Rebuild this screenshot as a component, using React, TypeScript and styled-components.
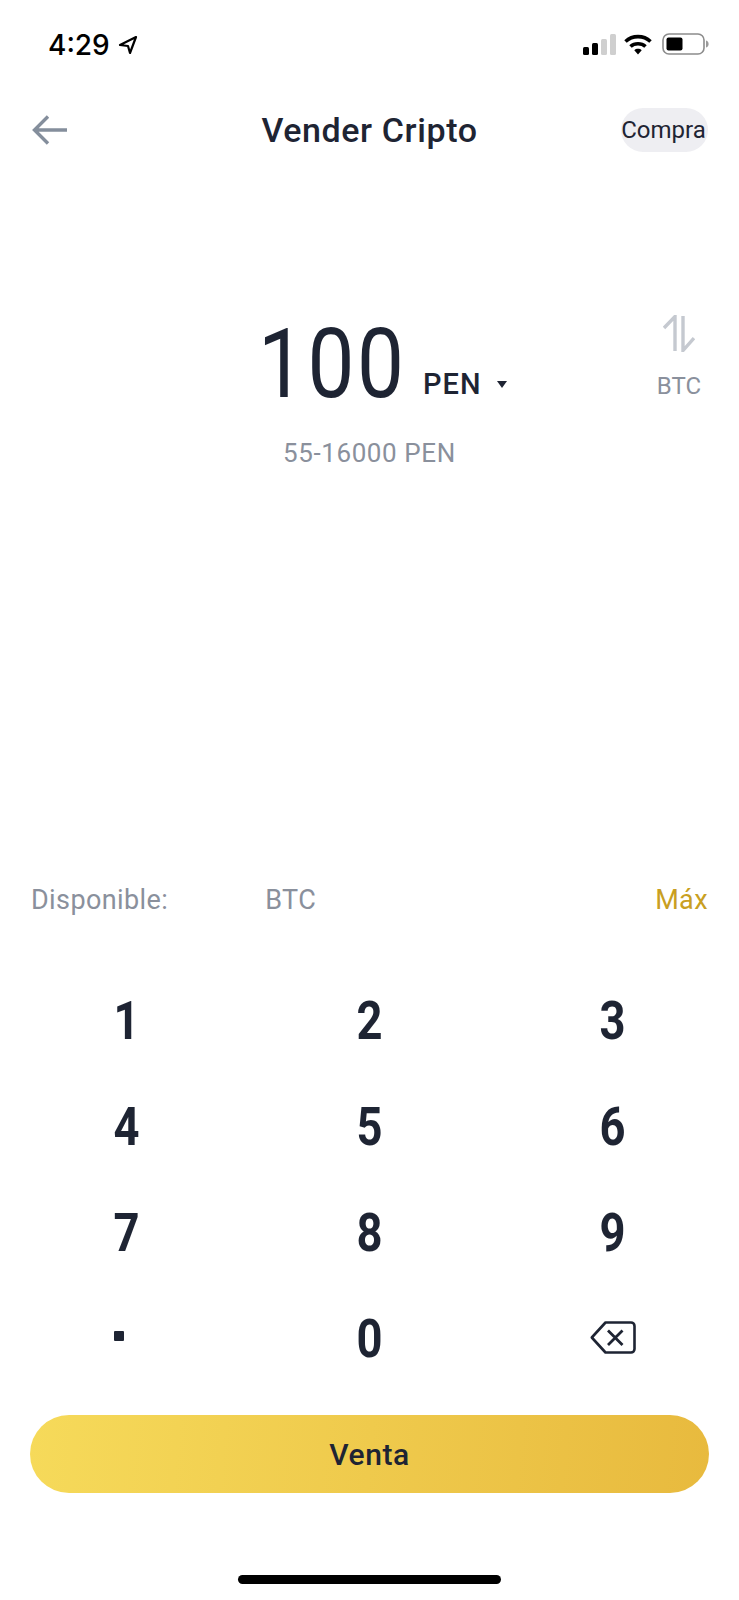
import React from 'react';
import styled, { createGlobalStyle } from 'styled-components';

const ink = '#1e2433';
const muted = '#8a909c';

const GlobalStyle = createGlobalStyle`
  html, body {
    margin: 0;
    padding: 0;
    background: #fff;
  }
  * {
    box-sizing: border-box;
  }
`;

const Page = styled.div`
  width: 739px;
  height: 1600px;
  overflow: hidden;
  display: flex;
  flex-direction: column;
  background: #fff;
  color: ${ink};
  font-family: Roboto, 'Liberation Sans', sans-serif;
`;

const StatusBar = styled.div`
  height: 90px;
  padding: 33px 30px 0 48px;
  display: flex;
  justify-content: space-between;
  align-items: flex-start;
`;

const Clock = styled.div`
  display: flex;
  align-items: center;
  gap: 8px;
  height: 24px;
  font-family: Inter, sans-serif;
  font-size: 28px;
  font-weight: 500;
  color: #000;
`;

const StatusIcons = styled.div`
  display: flex;
  align-items: flex-end;
  gap: 10px;
`;

const Signal = styled.div`
  display: flex;
  align-items: flex-end;
  gap: 3px;
  height: 21px;
  margin-right: -2px;
`;

const SignalBar = styled.span<{ $h: number; $on: boolean }>`
  width: 6px;
  height: ${p => p.$h}px;
  border-radius: 1.5px;
  background: ${p => (p.$on ? '#000' : '#cfcfcf')};
`;

const Header = styled.header`
  height: 60px;
  margin-top: 10px;
  padding: 0 32px 0 32px;
  display: grid;
  grid-template-columns: 85px 1fr 85px;
  align-items: center;
`;

const Title = styled.h1`
  margin: 0;
  text-align: center;
  font-size: 34px;
  font-weight: 500;
  letter-spacing: 0.6px;
`;

const SwitchPill = styled.div`
  justify-self: end;
  width: 87px;
  height: 44px;
  margin-right: -1px;
  padding-right: 2px;
  border-radius: 22px;
  background: #eeeef2;
  display: flex;
  align-items: center;
  justify-content: center;
  font-size: 24px;
  white-space: nowrap;
`;

const AmountRow = styled.section`
  margin-top: 159px;
  height: 116px;
  padding: 0 38px 0 258px;
  display: flex;
  align-items: flex-start;
`;

/* the app's digits are DIN, narrower than Roboto */
const Amount = styled.div`
  width: 141px;
  margin-top: 4px;
  font-size: 96px;
  line-height: 82px;
  font-weight: 400;
  letter-spacing: 3px;
  white-space: nowrap;
  transform: scaleX(0.87);
  transform-origin: left center;
`;

const Currency = styled.div`
  margin: 45px 0 0 24px;
  display: flex;
  align-items: center;
  gap: 16px;
  font-size: 29px;
  line-height: 40px;
  font-weight: 500;
  letter-spacing: 1px;
`;

const Caret = styled.span`
  width: 0;
  height: 0;
  border-left: 5.5px solid transparent;
  border-right: 5.5px solid transparent;
  border-top: 7px solid ${ink};
`;

const Toggle = styled.div`
  margin: -4px 0 0 auto;
  display: flex;
  flex-direction: column;
  align-items: center;
  gap: 24px;
  font-size: 24px;
  line-height: 20px;
  color: ${muted};
`;

const Range = styled.div`
  margin-top: 2px;
  padding-left: 283px;
  font-size: 26px;
  line-height: 32px;
  letter-spacing: 0.6px;
  color: ${muted};
`;

const Balance = styled.div`
  margin-top: 415px;
  padding: 0 31px;
  display: flex;
  align-items: center;
  font-size: 27px;
  line-height: 32px;
  letter-spacing: 0.4px;
  color: ${muted};
`;

const BalanceUnit = styled.span`
  margin-left: 97px;
`;

const MaxLink = styled.span`
  margin-left: auto;
  color: #c99f22;
`;

const Keypad = styled.div`
  margin: 50px auto 0;
  width: 729px;
  display: grid;
  grid-template-columns: repeat(3, 243px);
  grid-auto-rows: 106px;
`;

const Key = styled.div`
  display: flex;
  align-items: center;
  justify-content: center;
`;

const KeyDigit = styled.span`
  margin-top: 3px;
  font-size: 54px;
  font-weight: 700;
  transform: scaleX(0.84);
`;

const Dot = styled.span`
  width: 10px;
  height: 10px;
  margin: -2px 16px 0 0;
  background: ${ink};
  border-radius: 1px;
`;

const SubmitButton = styled.button`
  margin: 25px 30px 0;
  height: 78px;
  border: 0;
  border-radius: 39px;
  background: linear-gradient(95deg, #f6da5a 0%, #e8ba3e 100%);
  color: ${ink};
  font-family: Roboto, sans-serif;
  font-size: 30px;
  font-weight: 500;
  letter-spacing: 0.6px;
`;

const HomeIndicator = styled.div`
  margin: 82px auto 0;
  width: 263px;
  height: 9px;
  border-radius: 5px;
  background: #000;
`;

const keys = ['1', '2', '3', '4', '5', '6', '7', '8', '9'];

function LocationArrow() {
  return (
    <svg width="20" height="20" viewBox="0 0 20 20" fill="none">
      <path d="M18 2 2 10l8 1 2 7z" stroke="#000" strokeWidth="2.2" strokeLinejoin="round" />
    </svg>
  );
}

function Wifi() {
  return (
    <svg width="28" height="21" viewBox="0 0 28 21" fill="none">
      <path d="M1.5 7.5C8.5 1 19.5 1 26.5 7.5" stroke="#000" strokeWidth="3.6" />
      <path d="M6.5 12.5C10.5 8.8 17.5 8.8 21.5 12.5" stroke="#000" strokeWidth="3.6" />
      <path d="M10.3 16.2 14 20.5l3.7-4.3c-2-1.8-5.4-1.8-7.4 0z" fill="#000" />
    </svg>
  );
}

function Battery() {
  return (
    <svg width="47" height="22" viewBox="0 0 47 22" fill="none">
      <rect x="1" y="1" width="41" height="20" rx="6" stroke="#8c8c8c" strokeWidth="1.6" />
      <rect x="4.5" y="4.5" width="16" height="13" rx="2" fill="#000" />
      <path d="M44 7.5c2 .6 2.6 2 2.6 3.5s-.6 2.9-2.6 3.5z" fill="#9a9a9a" />
    </svg>
  );
}

function BackArrow() {
  return (
    <svg width="36" height="30" viewBox="0 0 36 30" fill="none">
      <path d="M35 15H3M16 1.5 2.5 15 16 28.5" stroke="#848e9c" strokeWidth="3.4" />
    </svg>
  );
}

function SwapIcon() {
  return (
    <svg width="32" height="37" viewBox="0 0 32 37" fill="none">
      <path d="M1 13 12 1.5V36" stroke="#c5c9d0" strokeWidth="3.4" />
      <path d="M20 1v34.5L31 23" stroke="#c5c9d0" strokeWidth="3.4" />
    </svg>
  );
}

function BackspaceIcon() {
  return (
    <svg width="46" height="33" viewBox="0 0 46 33" fill="none">
      <path
        d="M15.5 1.5H41a3.5 3.5 0 0 1 3.5 3.5v23a3.5 3.5 0 0 1-3.5 3.5H15.5L1.8 16.5z"
        stroke={ink}
        strokeWidth="2.6"
        strokeLinejoin="round"
      />
      <path d="M18 9.5 32.5 24M32.5 9.5 18 24" stroke={ink} strokeWidth="2.8" />
    </svg>
  );
}

export default function App() {
  return (
    <>
      <GlobalStyle />
      <Page>
        <StatusBar>
          <Clock>
            4:29
            <LocationArrow />
          </Clock>
          <StatusIcons>
            <Signal>
              <SignalBar $h={8} $on />
              <SignalBar $h={12} $on />
              <SignalBar $h={16} $on={false} />
              <SignalBar $h={21} $on={false} />
            </Signal>
            <Wifi />
            <Battery />
          </StatusIcons>
        </StatusBar>

        <Header>
          <BackArrow />
          <Title>Vender Cripto</Title>
          <SwitchPill>Compra</SwitchPill>
        </Header>

        <AmountRow>
          <Amount>100</Amount>
          <Currency>
            PEN
            <Caret />
          </Currency>
          <Toggle>
            <SwapIcon />
            BTC
          </Toggle>
        </AmountRow>
        <Range>55-16000 PEN</Range>

        <Balance>
          Disponible:
          <BalanceUnit>BTC</BalanceUnit>
          <MaxLink>Máx</MaxLink>
        </Balance>

        <Keypad>
          {keys.map(k => (
            <Key key={k}>
              <KeyDigit>{k}</KeyDigit>
            </Key>
          ))}
          <Key>
            <Dot />
          </Key>
          <Key>
            <KeyDigit>0</KeyDigit>
          </Key>
          <Key>
            <BackspaceIcon />
          </Key>
        </Keypad>

        <SubmitButton>Venta</SubmitButton>
        <HomeIndicator />
      </Page>
    </>
  );
}
